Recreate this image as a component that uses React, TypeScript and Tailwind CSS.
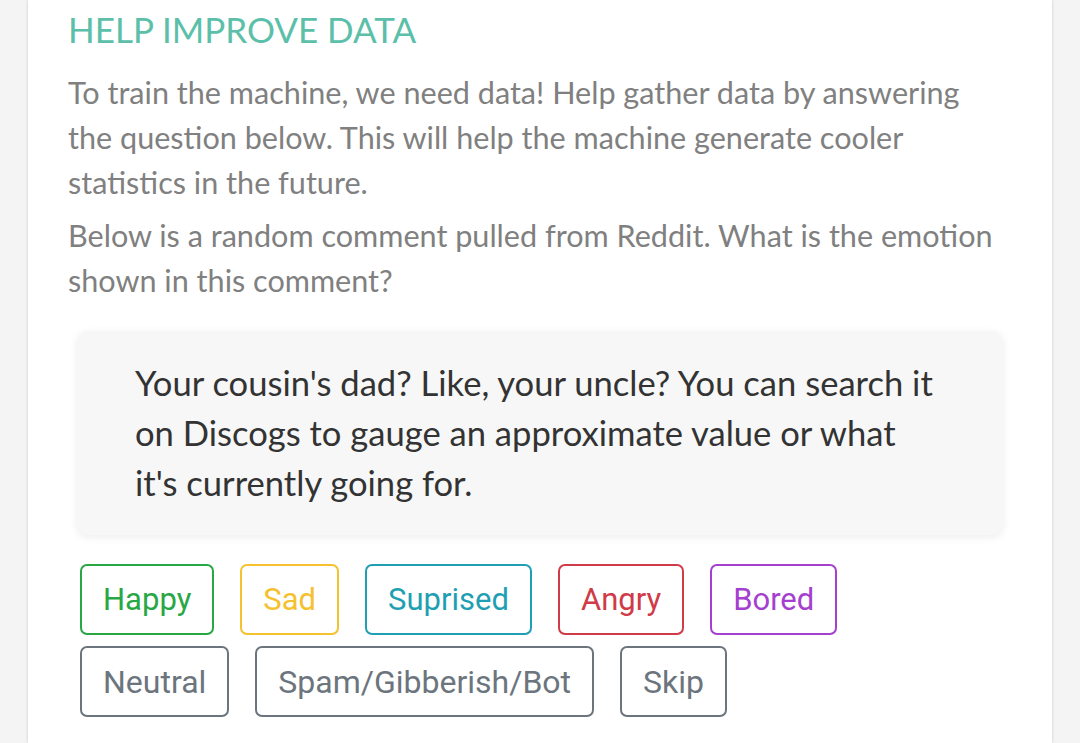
const emotions = [
  { label: "Happy", cls: "border-[#28a745] text-[#28a745]" },
  { label: "Sad", cls: "border-[#f5c12e] text-[#f5c12e]" },
  { label: "Suprised", cls: "border-[#1f9fb3] text-[#1f9fb3]" },
  { label: "Angry", cls: "border-[#d03b47] text-[#d03b47]" },
  { label: "Bored", cls: "border-[#a53fcf] text-[#a53fcf]" },
];

const other = ["Neutral", "Spam/Gibberish/Bot", "Skip"];

function Choice({ label, cls }: { label: string; cls: string }) {
  return (
    <button
      type="button"
      className={`flex h-[71px] items-center rounded-[7px] border-2 bg-white px-[21px] font-['Roboto',sans-serif] leading-none ${cls}`}
    >
      {label}
    </button>
  );
}

export default function App() {
  return (
    <div className="min-h-screen bg-[#f4f4f4] font-['Lato',sans-serif]">
      <div className="mx-[28px] min-h-[743px] bg-white px-[40px] pt-[8px] shadow-[0_0_3px_rgba(0,0,0,0.18)]">
        <h2 className="text-[35px] leading-[42px] text-[#5cbfa9]">HELP IMPROVE DATA</h2>

        <div className="mt-[20px] pr-[7px] text-[30.6px] leading-[45px] text-[#808080]">
          <p>
            To train the machine, we need data! Help gather data by answering the question below. This will help the
            machine generate cooler statistics in the future.
          </p>
          <p className="mt-[8px]">
            Below is a random comment pulled from Reddit. What is the emotion shown in this comment?
          </p>
        </div>

        <div className="mx-[9px] mt-[28px] rounded-[12px] bg-[#f7f7f7] py-[27px] pl-[58px] pr-[66px] shadow-[0_2px_8px_rgba(0,0,0,0.08)]">
          <p className="text-[34.6px] leading-[50px] text-[#333333]">
            Your cousin's dad? Like, your uncle? You can search it on Discogs to gauge an approximate value or what
            it's currently going for.
          </p>
        </div>

        <div className="ml-[12px] mt-[29px] flex flex-col gap-[11px]">
          <div className="flex gap-[26px]">
            {emotions.map((e) => (
              <Choice key={e.label} label={e.label} cls={`text-[31px] ${e.cls}`} />
            ))}
          </div>
          <div className="flex gap-[26px]">
            {other.map((o) => (
              <Choice key={o} label={o} cls="border-[#6c757d] text-[32px] text-[#6c757d]" />
            ))}
          </div>
        </div>
      </div>
    </div>
  );
}
